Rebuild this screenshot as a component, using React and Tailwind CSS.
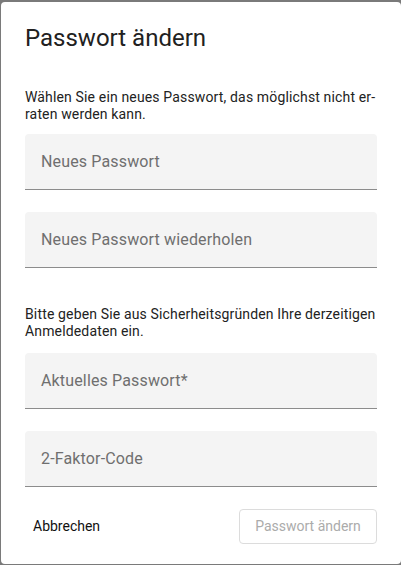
import React from "react";

const Field = ({ label }) => (
  <div className="h-[56px] rounded-t-[4px] bg-[#f4f4f4] border-b border-[#8c8c8c] flex items-center px-4">
    <span className="text-[16px] tracking-[0.15px] text-[#6f6f6f]">{label}</span>
  </div>
);

const App = () => {
  return (
    <div className="w-[401px] h-[565px] bg-[#7a7a7a] pl-[1px] pt-[2px] overflow-hidden" style={{ fontFamily: "Roboto, 'Liberation Sans', sans-serif" }}>
      <div className="w-[400px] h-[562px] bg-white rounded-[4px] px-6 pt-5 flex flex-col" lang="de">
        {/* Title */}
        <h2 className="text-[24px] leading-[32px] text-[#212121] font-normal">Passwort ändern</h2>

        {/* New password section */}
        <p className="mt-[35px] text-[14px] leading-[16.6px] tracking-[0.15px] text-[#222]">
          Wählen Sie ein neues Passwort, das möglichst nicht er-
          <br />
          raten werden kann.
        </p>
        <div className="mt-[12px]">
          <Field label="Neues Passwort" />
        </div>
        <div className="mt-[22px]">
          <Field label="Neues Passwort wiederholen" />
        </div>

        {/* Current credentials */}
        <p className="mt-[38px] text-[14px] leading-[16.6px] tracking-[0.15px] text-[#222]">
          Bitte geben Sie aus Sicherheitsgründen Ihre derzeitigen
          <br />
          Anmeldedaten ein.
        </p>
        <div className="mt-[14px]">
          <Field label="Aktuelles Passwort*" />
        </div>
        <div className="mt-[22px]">
          <Field label="2-Faktor-Code" />
        </div>

        {/* Actions */}
        <div className="mt-[22px] flex items-center justify-between">
          <button className="h-[35px] px-2 text-[14px] text-[#111]">Abbrechen</button>
          <button className="h-[35px] w-[138px] rounded-[4px] border border-[#dcdcdc] text-[14px] text-[#ababab]" disabled>
            Passwort ändern
          </button>
        </div>
      </div>
    </div>
  );
};

export default App;
